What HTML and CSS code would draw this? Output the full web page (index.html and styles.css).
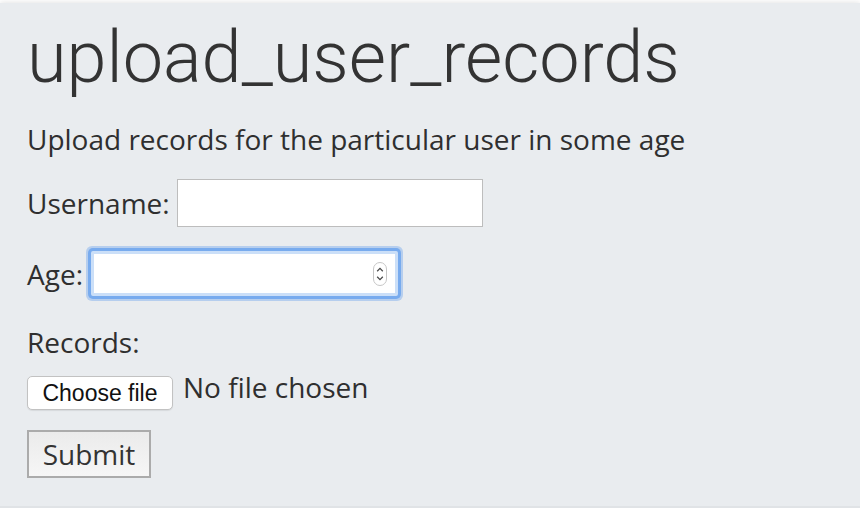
FILE: index.html
```html
<!DOCTYPE html>
<html>
<head>
<meta charset="utf-8">
<link rel="stylesheet" href="styles.css">
</head>
<body>
<div class="panel">
  <h1 class="title">upload_user_records</h1>
  <p class="desc">Upload records for the particular user in some age</p>
  <form class="form">
    <div class="row row-user">
      <label class="label" for="username">Username:</label>
      <input class="text-input" id="username" type="text">
    </div>
    <div class="row row-age">
      <label class="label" for="age">Age:</label>
      <span class="num-wrap">
        <input class="num-input" id="age" type="number">
        <span class="spinner">
          <svg width="14" height="24" viewBox="0 0 14 24">
            <rect x="0.5" y="0.5" width="13" height="23" rx="6.5" fill="#fff" stroke="#c6c6c6"/>
            <path d="M4.2 9.2 L7 6.4 L9.8 9.2" fill="none" stroke="#4a4a4a" stroke-width="1.3"/>
            <path d="M4.2 14.8 L7 17.6 L9.8 14.8" fill="none" stroke="#4a4a4a" stroke-width="1.3"/>
          </svg>
        </span>
      </span>
    </div>
    <div class="label records">Records:</div>
    <div class="file-row">
      <button type="button" class="file-btn">Choose file</button>
      <span class="file-status">No file chosen</span>
    </div>
    <div class="submit-row">
      <button type="button" class="submit">Submit</button>
    </div>
  </form>
</div>
</body>
</html>
```
FILE: styles.css
```css
html, body {
  margin: 0;
  padding: 0;
  background: #ffffff;
}
body {
  font-family: "Open Sans", "Noto Sans", sans-serif;
  color: #2f2f2f;
}
.panel {
  margin-top: 3px;
  height: 505px;
  box-sizing: border-box;
  background: #e9ecef;
  box-shadow: 0 -1px 5px rgba(0,0,0,0.10);
  border-bottom: 2px solid #e0e3e6;
  padding: 13px 27px 0;
  overflow: hidden;
}
.title {
  margin: 0;
  font-family: Roboto, "Liberation Sans", sans-serif;
  font-weight: 300;
  font-size: 72px;
  line-height: 84px;
  color: #333;
}
.desc {
  margin: 20px 0 0;
  font-size: 28px;
  line-height: 38px;
}
.form {
  margin-top: 21px;
}
.row {
  display: flex;
  align-items: center;
}
.row-user {
  gap: 7px;
}
.row-age {
  gap: 8px;
  margin-top: 24px;
}
.label {
  font-size: 28px;
  line-height: 38px;
}
.text-input {
  width: 306px;
  height: 48px;
  box-sizing: border-box;
  border: 1px solid #bdbdbd;
  background: #fff;
  margin: 0;
  padding: 0 6px;
  font-size: 22px;
  outline: none;
}
.num-wrap {
  position: relative;
  display: block;
}
.num-input {
  display: block;
  width: 307px;
  height: 45px;
  box-sizing: border-box;
  border: 3px solid #cbdff8;
  border-radius: 2px;
  box-shadow: 0 0 0 3px #78abee, 0 0 0 5px rgba(120, 171, 238, 0.45);
  background: #fff;
  margin: 0;
  padding: 0 6px;
  font-size: 22px;
  outline: none;
  -moz-appearance: textfield;
}
.num-input::-webkit-inner-spin-button,
.num-input::-webkit-outer-spin-button {
  -webkit-appearance: none;
  margin: 0;
}
.spinner {
  position: absolute;
  right: 11px;
  top: 11px;
  width: 14px;
  height: 24px;
  pointer-events: none;
}
.spinner svg {
  display: block;
}
.records {
  margin-top: 27px;
}
.file-row {
  display: flex;
  align-items: flex-start;
  gap: 10px;
  margin-top: 7px;
}
.file-btn {
  margin-top: 8px;
  width: 146px;
  height: 34px;
  background: #fff;
  border: 1px solid #c2c2c2;
  border-radius: 5px;
  box-shadow: 0 1px 1px rgba(0,0,0,0.08);
  font-family: "Liberation Sans", Arial, sans-serif;
  font-size: 23px;
  line-height: 32px;
  color: #111;
  padding: 0;
}
.file-status {
  font-size: 28px;
  line-height: 38px;
}
.submit-row {
  margin-top: 20px;
}
.submit {
  display: block;
  width: 124px;
  height: 48px;
  box-sizing: border-box;
  border: 2px solid #ababab;
  background: linear-gradient(#ebebeb, #f6f6f6);
  font-family: "Open Sans", sans-serif;
  font-size: 28px;
  line-height: 44px;
  color: #333;
  padding: 0;
}
```
